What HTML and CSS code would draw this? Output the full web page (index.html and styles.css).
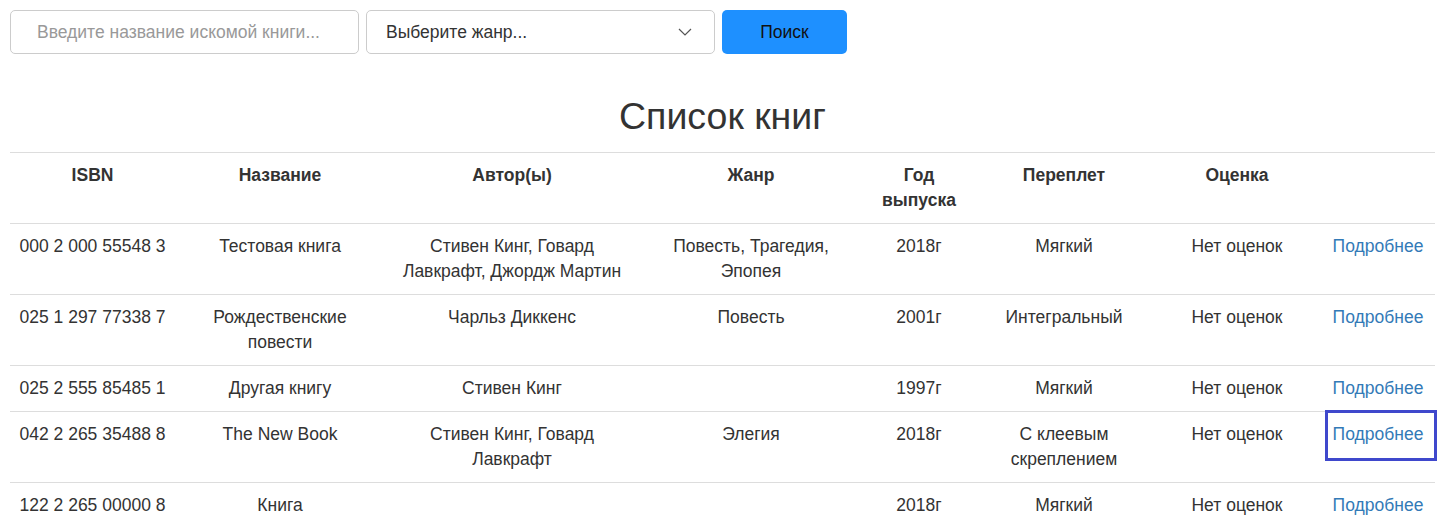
FILE: index.html
```html
<!DOCTYPE html>
<html lang="ru">
<head>
<meta charset="utf-8">
<title>Список книг</title>
<link rel="stylesheet" href="styles.css">
</head>
<body>
<div class="page">
  <form class="search">
    <input class="field input" type="text" placeholder="Введите название искомой книги...">
    <div class="field select">
      <span>Выберите жанр...</span>
      <svg class="chev" width="14" height="8" viewBox="0 0 14 8"><path d="M1 1 L7 7 L13 1" fill="none" stroke="#555" stroke-width="1.2"/></svg>
    </div>
    <button class="btn" type="button">Поиск</button>
  </form>

  <h2 class="title">Список книг</h2>

  <table class="books">
    <colgroup>
      <col class="c1"><col class="c2"><col class="c3"><col class="c4"><col class="c5"><col class="c6"><col class="c7"><col class="c8">
    </colgroup>
    <thead>
      <tr>
        <th>ISBN</th><th>Название</th><th>Автор(ы)</th><th>Жанр</th><th>Год выпуска</th><th>Переплет</th><th>Оценка</th><th></th>
      </tr>
    </thead>
    <tbody>
      <tr>
        <td class="isbn">000 2 000 55548 3</td><td>Тестовая книга</td><td>Стивен Кинг, Говард Лавкрафт, Джордж Мартин</td><td>Повесть, Трагедия, Эпопея</td><td>2018г</td><td>Мягкий</td><td>Нет оценок</td><td><a href="#">Подробнее</a></td>
      </tr>
      <tr>
        <td class="isbn">025 1 297 77338 7</td><td>Рождественские повести</td><td>Чарльз Диккенс</td><td>Повесть</td><td>2001г</td><td>Интегральный</td><td>Нет оценок</td><td><a href="#">Подробнее</a></td>
      </tr>
      <tr>
        <td class="isbn">025 2 555 85485 1</td><td>Другая книгу</td><td>Стивен Кинг</td><td></td><td>1997г</td><td>Мягкий</td><td>Нет оценок</td><td><a href="#">Подробнее</a></td>
      </tr>
      <tr>
        <td class="isbn">042 2 265 35488 8</td><td>The New Book</td><td>Стивен Кинг, Говард Лавкрафт</td><td>Элегия</td><td>2018г</td><td>С клеевым скреплением</td><td>Нет оценок</td><td><a class="focused" href="#">Подробнее</a></td>
      </tr>
      <tr>
        <td class="isbn">122 2 265 00000 8</td><td>Книга</td><td></td><td></td><td>2018г</td><td>Мягкий</td><td>Нет оценок</td><td><a href="#">Подробнее</a></td>
      </tr>
    </tbody>
  </table>
</div>
</body>
</html>
```

FILE: styles.css
```css
* { box-sizing: border-box; }

html, body {
  margin: 0;
  padding: 0;
  background: #fff;
}

body {
  font-family: "Liberation Sans", Arial, Helvetica, sans-serif;
  font-size: 17.5px;
  line-height: 25px;
  color: #333;
}

.page {
  padding: 10px 11px 0 10px;
}

.search {
  display: flex;
  gap: 7px;
  margin: 0;
}

.field {
  height: 43.5px;
  border: 1px solid #ccc;
  border-radius: 5px;
  background: #fff;
  font-family: inherit;
  font-size: 17.5px;
  color: #555;
}

.input {
  width: 349px;
  padding: 1px 10px 0 26px;
  outline: none;
}

.input::placeholder {
  color: #999;
}

.select {
  width: 349px;
  display: flex;
  align-items: center;
  justify-content: space-between;
  padding: 1px 22px 0 19px;
  color: #333;
}

.chev {
  display: block;
}

.btn {
  width: 125px;
  height: 43.5px;
  border: none;
  border-radius: 5px;
  background: #1e90ff;
  color: #111;
  font-family: inherit;
  font-size: 17.5px;
  padding: 1px 0 0;
}

.title {
  margin: 42px 0 15px;
  font-size: 37.5px;
  line-height: 41px;
  font-weight: 400;
  text-align: center;
  color: #333;
}

.books {
  width: 1425px;
  border-collapse: collapse;
  table-layout: fixed;
}

.c1 { width: 165px; }
.c2 { width: 210px; }
.c3 { width: 254px; }
.c4 { width: 224px; }
.c5 { width: 112px; }
.c6 { width: 178px; }
.c7 { width: 168px; }
.c8 { width: 114px; }

.books th,
.books td {
  padding: 10px;
  text-align: center;
  vertical-align: top;
  border-top: 1px solid #ddd;
}

.books td.isbn {
  white-space: nowrap;
  padding: 10px 4px;
}

.books th {
  font-weight: 700;
  border-bottom: 1px solid #ddd;
}

.books a {
  color: #337ab7;
  text-decoration: none;
}

.books a.focused {
  display: inline-block;
  padding: 9px 11px 11px 5px;
  margin: -9px -11px -11px -5px;
  outline: 3px solid #3f48cc;
}
```
